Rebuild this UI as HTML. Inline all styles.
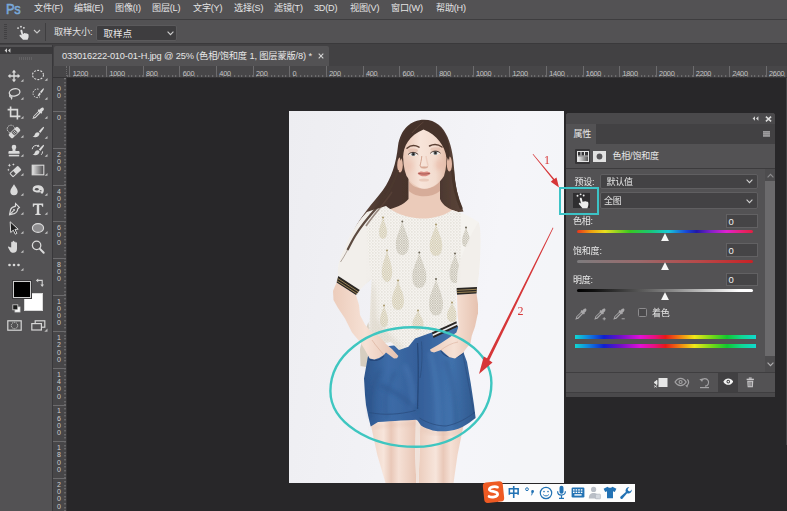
<!DOCTYPE html>
<html lang="zh-CN">
<head>
<meta charset="utf-8">
<title>Photoshop</title>
<style>
*{box-sizing:border-box;margin:0;padding:0}
html,body{width:787px;height:511px;overflow:hidden;background:#282729}
body{position:relative;font-family:"Liberation Sans","Noto Sans CJK SC",sans-serif;color:#dcdcdc;font-size:9.5px;line-height:1}
.abs{position:absolute}
#menubar{left:0;top:0;width:787px;height:19px;background:#535254}
#menubar span{position:absolute;top:4.300px;font-size:9.100px;color:#e4e4e4;white-space:nowrap;letter-spacing:-0.2px}
#ps{position:absolute;left:5.500px;top:1.500px;font-size:14px;font-weight:normal;color:#79a8d8;letter-spacing:-0.3px;transform:scaleX(.92);transform-origin:0 0;-webkit-text-stroke:.55px #7aa9d9;font-family:"Liberation Sans",sans-serif}
#optbar{left:0;top:19px;width:787px;height:25px;background:#535254;border-top:1px solid #3e3d3f;border-bottom:1px solid #3a393b}
#tabbar{left:0;top:44px;width:787px;height:22px;background:#424143}
#tab{left:54px;top:46px;width:275px;height:20px;background:#535254;border-radius:2px 2px 0 0}
#tab span{position:absolute;left:8px;top:5.700px;font-size:9.25px;color:#e6e6e6;white-space:nowrap;letter-spacing:-0.15px}
#toolbar{left:0;top:45px;width:52px;height:466px;background:#535254}
#toolhead{left:0;top:46.500px;width:52px;height:7px;background:#3a393b}
#tgap{left:52px;top:45px;width:1px;height:466px;background:#38373a}
#hruler{left:53px;top:65.500px;width:734px;height:12.500px;background:#474648;border-bottom:1px solid #353436}
#vruler{left:53px;top:78px;width:14px;height:433px;background:#474648;border-right:1px solid #353436}
#canvas{left:67px;top:78px;width:720px;height:433px;background:#282729}
#photo{left:289px;top:111px;width:275px;height:372px;background:#efeff3}
.rl{position:absolute;top:4.300px;font-size:7.300px;font-weight:normal;color:#c4c4c4;letter-spacing:-0.2px}
#hruler{overflow:hidden}#vruler{overflow:hidden}
.hticks{position:absolute;left:14px;right:0;bottom:0;height:2px;background:repeating-linear-gradient(90deg,#757476 0,#757476 1px,transparent 1px,transparent 3.665px);background-position:2.200px 0}
.vticks{position:absolute;top:0;bottom:0;right:0;width:2px;background:repeating-linear-gradient(180deg,#757476 0,#757476 1px,transparent 1px,transparent 3.665px);background-position:0 0.300px}
.corner{position:absolute;left:0;top:0;width:14px;height:12.500px;border-right:1px dotted #6a696b;border-bottom:1px dotted #6a696b}
.rt{position:absolute;display:block;top:0;width:1px;height:12px;background:#6c6b6d}
.vl{position:absolute;left:3px;font-size:7px;font-weight:normal;color:#cfcfcf;width:6px;text-align:center;line-height:7.3px}
.vt{position:absolute;display:block;left:0;height:1px;width:14px;background:#6c6b6d}
.grip{position:absolute;left:4px;top:4px;width:3px;height:16px;background:repeating-linear-gradient(180deg,#414042 0,#414042 1px,transparent 1px,transparent 2px)}
.dd{background:#434244;border:1px solid #605f61;border-radius:2px}
.dd span{position:absolute;font-size:9.500px;color:#e6e6e6;white-space:nowrap}
#panel{left:566px;top:113px;width:209px;height:284px;background:#535254;border-radius:3px 3px 0 0}
#panel .t{font-size:9px;color:#e8e8e8;white-space:nowrap;letter-spacing:-0.2px;margin-top:.8px}
#panel .dd span{font-size:9px;letter-spacing:-0.2px;margin-top:.6px}
.nb{width:32px;height:13.500px;background:#454446;border:1px solid #626163}
.nb span{position:absolute;left:1.500px;top:1.500px;font-size:9.500px;color:#f0f0f0}
.hd{position:absolute;width:0;height:0;margin-left:.8px;border-left:4.200px solid transparent;border-right:4.200px solid transparent;border-bottom:8px solid #f6f6f6;filter:drop-shadow(0 0 .7px #1c1c1c)}
</style>
</head>
<body>
<div id="menubar" class="abs">
<div id="ps">Ps</div>
<span style="left:34px">文件(F)</span>
<span style="left:74px">编辑(E)</span>
<span style="left:115px">图像(I)</span>
<span style="left:152px">图层(L)</span>
<span style="left:193px">文字(Y)</span>
<span style="left:234px">选择(S)</span>
<span style="left:274px">滤镜(T)</span>
<span style="left:314px">3D(D)</span>
<span style="left:350px">视图(V)</span>
<span style="left:391px">窗口(W)</span>
<span style="left:436px">帮助(H)</span>
</div>
<div id="optbar" class="abs">
<div class="grip"></div>
<svg class="abs" style="left:13.500px;top:3.500px" width="18" height="18" viewBox="0 0 16 16"><g fill="#e2e2e2"><path d="M6.2 5.2c.7-.2 1.2.2 1.3.9l.5 2.6.6-.1c.4-.7 1.1-.6 1.500-.1.500-.5 1.200-.4 1.500.2.600-.3 1.200.1 1.300.8.200 1.300.1 2.600-.5 3.700l-.3.800H8.000L5.100 10.800c-.4-.5-.2-1 .2-1.200.4-.2.800-.1 1.100.2l.5.500-1.200-4c-.1-.500.100-.900.500-1.100z"/><circle cx="3.600" cy="3.600" r=".8"/><circle cx="6.200" cy="2.400" r=".8"/><circle cx="8.800" cy="3.400" r=".8"/></g></svg>
<svg class="abs" style="left:33px;top:9px" width="8" height="6" viewBox="0 0 8 6"><path d="M1 1l3 3 3-3" fill="none" stroke="#c9c9c9" stroke-width="1.100"/></svg>
<div class="abs" style="left:45px;top:3px;width:1px;height:18px;background:#3f3e40"></div>
<span class="abs" style="left:54px;top:7.500px;font-size:9.200px;color:#e0e0e0;white-space:nowrap;letter-spacing:-0.2px">取样大小:</span>
<div class="abs dd" style="left:96px;top:4.500px;width:81px;height:16.500px;background:#3e3d3f;border-color:#5b5a5c"><span style="left:6.500px;top:3px">取样点</span>
<svg class="abs" style="right:2.500px;top:5.500px" width="7" height="5" viewBox="0 0 7 5"><path d="M.6.700l2.900 2.900L6.400.700" fill="none" stroke="#d0d0d0" stroke-width="1.100"/></svg></div>
</div>
<div id="tabbar" class="abs"></div>
<div id="tab" class="abs"><span>033016222-010-01-H.jpg @ 25% (色相/饱和度 1, 图层蒙版/8) *</span><svg class="abs" style="left:264px;top:7px" width="6" height="6" viewBox="0 0 6 6"><path d="M.7.700l4.600 4.600M5.300.700L.7 5.300" stroke="#d4d4d4" stroke-width="1.100"/></svg></div>
<div id="toolbar" class="abs"></div>
<div id="toolhead" class="abs"></div>
<div id="tools"><svg class="abs" style="left:5.8px;top:67.8px;overflow:visible" width="16" height="16" viewBox="0 0 16 16"><g fill="#dadada"><path d="M8 1.800l2.200 2.600H8.700v2.900h2.900V5.800L14.200 8l-2.600 2.200V8.700H8.700v2.900h1.500L8 14.200l-2.200-2.600h1.500V8.700H4.400v1.500L1.800 8l2.600-2.200v1.500h2.900V4.400H5.800z"/></g><path d="M17.500 11v2.800h-2.800z" fill="#c2c2c2"/></svg><svg class="abs" style="left:29.6px;top:67.4px;overflow:visible" width="16" height="16" viewBox="0 0 16 16"><ellipse cx="8" cy="8" rx="5.500" ry="4.600" fill="none" stroke="#dadada" stroke-width="1.100" stroke-dasharray="2 1.200"/><path d="M17.500 11v2.800h-2.800z" fill="#c2c2c2"/></svg><svg class="abs" style="left:6.0px;top:86.0px;overflow:visible" width="16" height="16" viewBox="0 0 16 16"><g fill="none" stroke="#dadada" stroke-width="1.300"><ellipse cx="8.600" cy="6.400" rx="5.400" ry="3.600" transform="rotate(-14 8.600 6.400)"/><path d="M4.400 8.600c-1.400 1.200-.6 2.600.6 2.400 1-.2 1 1 .2 2.400"/></g><path d="M17.500 11v2.800h-2.800z" fill="#c2c2c2"/></svg><svg class="abs" style="left:30.0px;top:86.0px;overflow:visible" width="16" height="16" viewBox="0 0 16 16"><g><path d="M8.500 3.200a4.300 4.300 0 1 0 1.500 7.500" fill="none" stroke="#dadada" stroke-width="1" stroke-dasharray="1.600 1.100"/><path d="M13.800 2.400c.5.500-.8 2.800-2.500 4.800l-1.300-1.200c1.700-2 3.300-4 3.800-3.600zM9.500 6.600l1.200 1.200c-.3 1.600-1.700 2.600-3.300 2.500.9-.8.900-2.700 2.100-3.700z" fill="#dadada"/></g><path d="M17.500 11v2.800h-2.800z" fill="#c2c2c2"/></svg><svg class="abs" style="left:6.0px;top:105.2px;overflow:visible" width="16" height="16" viewBox="0 0 16 16"><g fill="none" stroke="#dadada" stroke-width="1.600"><path d="M4.600 1.600v9.800h9.800"/><path d="M1.600 4.600h9.800v9.800"/></g><path d="M17.500 11v2.800h-2.800z" fill="#c2c2c2"/></svg><svg class="abs" style="left:30.0px;top:105.2px;overflow:visible" width="16" height="16" viewBox="0 0 16 16"><g fill="#dadada"><path d="M13.300 2.700c.9.900.7 2.100-.1 2.900l-1.500 1.500.6.600-1.100 1.100-.7-.7-4.700 4.700c-.5.500-1.200.7-1.800.5l-1 .8-.6-.6.800-1c-.2-.6 0-1.300.5-1.800l4.700-4.700-.7-.7 1.100-1.100.600.600 1.500-1.500c.800-.800 2-.900 2.400-.600zM8.600 6.900L4.300 11.200c-.3.300-.3.700-.2.900.2.100.600.100.900-.2l4.300-4.300z"/></g><path d="M17.500 11v2.800h-2.800z" fill="#c2c2c2"/></svg><svg class="abs" style="left:6.0px;top:124.4px;overflow:visible" width="16" height="16" viewBox="0 0 16 16"><g><circle cx="5" cy="5" r="3.800" fill="none" stroke="#dadada" stroke-width=".9" stroke-dasharray="1.400 1"/><g transform="rotate(-45 8.500 8.500)"><rect x="2.200" y="5.700" width="12.600" height="5.600" rx="1.600" fill="#dadada"/><rect x="6.300" y="6.400" width="4.400" height="4.200" fill="#535254"/><circle cx="7.600" cy="7.700" r=".55" fill="#dadada"/><circle cx="9.400" cy="7.700" r=".55" fill="#dadada"/><circle cx="7.600" cy="9.400" r=".55" fill="#dadada"/><circle cx="9.400" cy="9.400" r=".55" fill="#dadada"/></g></g><path d="M17.500 11v2.800h-2.800z" fill="#c2c2c2"/></svg><svg class="abs" style="left:30.0px;top:124.8px;overflow:visible" width="16" height="16" viewBox="0 0 16 16"><g fill="#dadada"><path d="M13.900 1.900c.6.600-1.300 3.300-3.600 6l-1.500-1.400c2.300-2.700 4.500-5.100 5.100-4.600zM8.200 7.200l1.400 1.400c-.3 2.200-2 3.700-4.400 3.700-1.100 0-2-.3-2.600-.7 1.600-.3 1.900-1.200 2.300-2.300.4-1.200 1.600-2.200 3.300-2.100z"/></g><path d="M17.500 11v2.800h-2.800z" fill="#c2c2c2"/></svg><svg class="abs" style="left:6.0px;top:143.3px;overflow:visible" width="16" height="16" viewBox="0 0 16 16"><g fill="#dadada"><path d="M8 1.800a2.300 2.300 0 0 1 2.300 2.300c0 1.100-.8 1.700-.9 2.800-.1.800.3 1.200 1.300 1.200h1.600c.8 0 1.300.5 1.300 1.300v1.400H2.400V9.400c0-.8.500-1.300 1.300-1.300h1.600c1 0 1.400-.4 1.300-1.200-.1-1.100-.9-1.700-.9-2.800A2.300 2.300 0 0 1 8 1.800z"/><rect x="2.800" y="11.800" width="10.400" height="1.600"/></g><path d="M17.500 11v2.800h-2.800z" fill="#c2c2c2"/></svg><svg class="abs" style="left:30.0px;top:143.3px;overflow:visible" width="16" height="16" viewBox="0 0 16 16"><g><path d="M13.900 1.900c.6.600-1.300 3.300-3.600 6l-1.500-1.400c2.300-2.700 4.500-5.100 5.100-4.600zM8.200 7.200l1.400 1.400c-.3 2.200-2 3.700-4.400 3.700-1.100 0-2-.3-2.600-.7 1.600-.3 1.900-1.200 2.300-2.300.4-1.200 1.600-2.200 3.300-2.100z" fill="#dadada"/><path d="M2.200 6.200a4.200 4.200 0 0 1 6.300-3.200M12.600 8.400a4.600 4.600 0 0 1-1.400 3.400" fill="none" stroke="#dadada" stroke-width="1"/><path d="M8.100 1.400l1.600 2.200-2.700.3z" fill="#dadada"/></g><path d="M17.500 11v2.800h-2.800z" fill="#c2c2c2"/></svg><svg class="abs" style="left:6.0px;top:162.0px;overflow:visible" width="16" height="16" viewBox="0 0 16 16"><g fill="#dadada"><g transform="rotate(-42 9.500 9.500)"><rect x="3.600" y="6.700" width="11.600" height="5.600" rx="1.100"/><rect x="4.600" y="7.700" width="3.600" height="3.600" fill="#535254"/></g><path d="M3.400 1.600l.5 1.200 1.200.5-1.200.5-.5 1.200-.5-1.200-1.200-.5 1.200-.5zM7.400 1.200l.4.900.9.400-.9.400-.4.900-.4-.9-.9-.4.900-.4zM2.400 6.600l.4.900.9.400-.9.400-.4.900-.4-.9-.9-.4.900-.4z"/></g><path d="M17.500 11v2.800h-2.800z" fill="#c2c2c2"/></svg><svg class="abs" style="left:30.0px;top:161.6px;overflow:visible" width="16" height="16" viewBox="0 0 16 16"><defs><linearGradient id="gg" x1="0" x2="1"><stop offset="0" stop-color="#e6e6e6"/><stop offset="1" stop-color="#4a494b"/></linearGradient></defs><rect x="2.200" y="3.200" width="11.600" height="9.600" fill="url(#gg)" stroke="#dadada" stroke-width="1.100"/><path d="M17.500 11v2.800h-2.800z" fill="#c2c2c2"/></svg><svg class="abs" style="left:6.0px;top:181.5px;overflow:visible" width="16" height="16" viewBox="0 0 16 16"><path d="M8 2.200c1.600 2.600 3.700 4.900 3.700 7.400a3.700 3.700 0 0 1-7.400 0c0-2.500 2.100-4.800 3.700-7.400z" fill="#dadada"/><path d="M17.500 11v2.800h-2.800z" fill="#c2c2c2"/></svg><svg class="abs" style="left:30.0px;top:181.5px;overflow:visible" width="16" height="16" viewBox="0 0 16 16"><g fill="#dadada"><path d="M2.600 7.200c0-2.400 2.200-3.900 5.200-3.900s5.700 1.500 6 4.200c.2 1.500-.3 3-1 3.900h-1.900l-.5-1.400c-1 .5-2.400.6-3.700.4-2.500-.4-4.100-1.300-4.100-3.200z"/><ellipse cx="6.800" cy="7.200" rx="1.900" ry="1.300" fill="#535254"/><rect x="9.800" y="8.200" width="1.700" height="1.100" fill="#535254"/></g><path d="M17.500 11v2.800h-2.800z" fill="#c2c2c2"/></svg><svg class="abs" style="left:6.0px;top:200.8px;overflow:visible" width="16" height="16" viewBox="0 0 16 16"><g fill="none" stroke="#dadada" stroke-width="1.200"><path d="M9.600 2.600l3.800 3.800-1.600 1.400c-.2 2.300-1.300 4-3.600 4.800l-4.600 1 .9-4.700c.8-2.300 2.500-3.300 4.800-3.500z" /><path d="M3.800 13.400l3.600-3.600"/><circle cx="8" cy="9" r="1" fill="#dadada" stroke="none"/></g><path d="M17.500 11v2.800h-2.800z" fill="#c2c2c2"/></svg><svg class="abs" style="left:30.0px;top:200.8px;overflow:visible" width="16" height="16" viewBox="0 0 16 16"><path d="M2.800 2.600h10.400v3.200h-1.100c-.1-1.100-.5-1.700-1.600-1.700H9.200v7.900c0 .8.400 1.100 1.500 1.100v1H5.300v-1c1.100 0 1.500-.3 1.500-1.100V4.100H5.500c-1.100 0-1.500.6-1.600 1.700H2.800z" fill="#dadada"/><path d="M17.500 11v2.800h-2.800z" fill="#c2c2c2"/></svg><svg class="abs" style="left:6.0px;top:220.0px;overflow:visible" width="16" height="16" viewBox="0 0 16 16"><path d="M4.200 1.800l8 7.400-3.300.2 2 4-1.700.8-1.900-4-2.600 2.300z" fill="#1f1f1f" stroke="#dadada" stroke-width="1"/><path d="M17.500 11v2.800h-2.800z" fill="#c2c2c2"/></svg><svg class="abs" style="left:30.0px;top:219.6px;overflow:visible" width="16" height="16" viewBox="0 0 16 16"><ellipse cx="8" cy="8" rx="5.600" ry="4.400" fill="#8d8c8e" stroke="#dadada" stroke-width="1.100"/><path d="M17.500 11v2.800h-2.800z" fill="#c2c2c2"/></svg><svg class="abs" style="left:6.0px;top:238.8px;overflow:visible" width="16" height="16" viewBox="0 0 16 16"><path d="M5.200 8.400V3.600c0-1.100 1.400-1.100 1.400 0V2.600c0-1.100 1.500-1.100 1.500 0v.600c0-1.100 1.500-1.100 1.500 0v.900c0-1.100 1.400-1.100 1.400 0v5.700c0 2.400-1.200 4-3.700 4-1.800 0-2.600-.8-3.400-2.100L2.200 8.800c-.5-.900.500-1.600 1.200-.9z" fill="#dadada"/><path d="M17.500 11v2.800h-2.800z" fill="#c2c2c2"/></svg><svg class="abs" style="left:30.0px;top:239.0px;overflow:visible" width="16" height="16" viewBox="0 0 16 16"><g fill="none" stroke="#dadada"><circle cx="6.600" cy="6.400" r="4.200" stroke-width="1.300"/><path d="M9.700 9.600l4 4.200" stroke-width="2" stroke-linecap="round"/></g></svg><svg class="abs" style="left:6.0px;top:257.3px;overflow:visible" width="16" height="16" viewBox="0 0 16 16"><g fill="#dadada"><circle cx="3.500" cy="8" r="1.300"/><circle cx="8" cy="8" r="1.300"/><circle cx="12.500" cy="8" r="1.300"/></g><path d="M17.500 11v2.800h-2.800z" fill="#c2c2c2"/></svg>
<div class="abs" style="left:23.500px;top:292.500px;width:19px;height:18px;background:#fff;border:1px solid #d9d9d9"></div>
<div class="abs" style="left:12.500px;top:280.500px;width:18.500px;height:17.500px;background:#000;border:1px solid #cfcfcf;box-shadow:0 0 0 1px #3a393b"></div>
<svg class="abs" style="left:35px;top:278px" width="10" height="10" viewBox="0 0 10 10"><g fill="none" stroke="#d4d4d4" stroke-width="1.100"><path d="M2.600 2.400h4.600v4.800"/></g><path d="M3.200.6v3.600L.9 2.400zM5.400 6.600h3.600L7.200 9z" fill="#d4d4d4"/></svg>
<svg class="abs" style="left:11.500px;top:304px" width="9" height="9" viewBox="0 0 9 9"><rect x="3" y="3" width="5" height="5" fill="#fff" stroke="#d0d0d0" stroke-width=".8"/><rect x=".8" y=".8" width="5" height="5" fill="#1c1c1c" stroke="#d0d0d0" stroke-width=".8"/></svg>
<svg class="abs" style="left:6.500px;top:319.500px" width="15" height="11" viewBox="0 0 15 11"><rect x=".8" y=".8" width="13.400" height="9.400" fill="none" stroke="#d6d6d6" stroke-width="1.200"/><circle cx="7.500" cy="5.500" r="3.200" fill="none" stroke="#d6d6d6" stroke-width=".9" stroke-dasharray="1.200 .8"/></svg>
<svg class="abs" style="left:30.500px;top:319.500px;overflow:visible" width="15" height="11" viewBox="0 0 15 11"><rect x="4.200" y=".8" width="9.600" height="6.400" fill="#535254" stroke="#d6d6d6" stroke-width="1.200"/><rect x=".8" y="3.600" width="9.600" height="6.400" fill="#535254" stroke="#d6d6d6" stroke-width="1.200"/><path d="M16.500 8.500v3.200h-3.200z" fill="#b9b9b9"/></svg>
<svg class="abs" style="left:3.500px;top:47.800px" width="7" height="5" viewBox="0 0 7 5"><path d="M3 .3L.6 2.500 3 4.700zM6.400.3L4 2.500l2.400 2.200z" fill="#d0d0d0"/></svg>
<div class="abs" style="left:19px;top:57px;width:14px;height:3px;background:repeating-linear-gradient(90deg,#6a696b 0,#6a696b 1px,transparent 1px,transparent 2px);opacity:.7"></div>
</div>
<div id="tgap" class="abs"></div>
<div id="hruler" class="abs"><div class="corner"></div><div class="hticks"></div><i class="rt" style="left:16.4px"></i><b class="rl" style="left:19.7px">1200</b><i class="rt" style="left:53.1px"></i><b class="rl" style="left:56.4px">1000</b><i class="rt" style="left:89.7px"></i><b class="rl" style="left:93.0px">800</b><i class="rt" style="left:126.4px"></i><b class="rl" style="left:129.7px">600</b><i class="rt" style="left:163.0px"></i><b class="rl" style="left:166.3px">400</b><i class="rt" style="left:199.7px"></i><b class="rl" style="left:203.0px">200</b><i class="rt" style="left:236.3px"></i><b class="rl" style="left:239.6px">0</b><i class="rt" style="left:272.9px"></i><b class="rl" style="left:276.2px">200</b><i class="rt" style="left:309.6px"></i><b class="rl" style="left:312.9px">400</b><i class="rt" style="left:346.2px"></i><b class="rl" style="left:349.6px">600</b><i class="rt" style="left:382.9px"></i><b class="rl" style="left:386.2px">800</b><i class="rt" style="left:419.6px"></i><b class="rl" style="left:422.9px">1000</b><i class="rt" style="left:456.2px"></i><b class="rl" style="left:459.5px">1200</b><i class="rt" style="left:492.9px"></i><b class="rl" style="left:496.2px">1400</b><i class="rt" style="left:529.5px"></i><b class="rl" style="left:532.8px">1600</b><i class="rt" style="left:566.1px"></i><b class="rl" style="left:569.4px">1800</b><i class="rt" style="left:602.8px"></i><b class="rl" style="left:606.1px">2000</b><i class="rt" style="left:639.5px"></i><b class="rl" style="left:642.8px">2200</b><i class="rt" style="left:676.1px"></i><b class="rl" style="left:679.4px">2400</b><i class="rt" style="left:712.8px"></i><b class="rl" style="left:716.0px">2600</b></div>
<div id="vruler" class="abs"><div class="vticks"></div><i class="vt" style="top:-3.4px"></i><b class="vl" style="top:-0.5px">&nbsp;<br>0<br>0</b><i class="vt" style="top:33.3px"></i><b class="vl" style="top:36.2px">0</b><i class="vt" style="top:69.9px"></i><b class="vl" style="top:72.8px">2<br>0<br>0</b><i class="vt" style="top:106.6px"></i><b class="vl" style="top:109.5px">4<br>0<br>0</b><i class="vt" style="top:143.2px"></i><b class="vl" style="top:146.2px">6<br>0<br>0</b><i class="vt" style="top:179.9px"></i><b class="vl" style="top:182.8px">8<br>0<br>0</b><i class="vt" style="top:216.6px"></i><b class="vl" style="top:219.5px">1<br>0<br>0<br>0</b><i class="vt" style="top:253.2px"></i><b class="vl" style="top:256.1px">1<br>2<br>0<br>0</b><i class="vt" style="top:289.9px"></i><b class="vl" style="top:292.8px">1<br>4<br>0<br>0</b><i class="vt" style="top:326.5px"></i><b class="vl" style="top:329.4px">1<br>6<br>0<br>0</b><i class="vt" style="top:363.1px"></i><b class="vl" style="top:366.0px">1<br>8<br>0<br>0</b><i class="vt" style="top:399.8px"></i><b class="vl" style="top:402.7px">2<br>0<br>0<br>0</b></div>
<div id="canvas" class="abs"></div>
<div id="photo" class="abs"></div>
<svg id="fig" class="abs" style="left:289px;top:111px" width="275" height="372" viewBox="289 111 275 372">
<defs>
<filter id="soft" x="-5%" y="-5%" width="110%" height="110%"><feGaussianBlur stdDeviation="0.650"/></filter>
<filter id="b2" x="-30%" y="-30%" width="160%" height="160%"><feGaussianBlur stdDeviation="2"/></filter>
<filter id="b4" x="-30%" y="-30%" width="160%" height="160%"><feGaussianBlur stdDeviation="4"/></filter>
<linearGradient id="bgG" x1="0" y1="0" x2="1" y2=".25"><stop offset="0" stop-color="#ededf1"/><stop offset=".45" stop-color="#f1f1f5"/><stop offset=".8" stop-color="#f5f5f9"/><stop offset="1" stop-color="#f4f5f8"/></linearGradient>
<linearGradient id="hairG" x1="0" y1="0" x2="1" y2="0"><stop offset="0" stop-color="#6a5246"/><stop offset=".3" stop-color="#4b372f"/><stop offset=".7" stop-color="#44312a"/><stop offset="1" stop-color="#5c463a"/></linearGradient>
<linearGradient id="skinG" x1="0" y1="0" x2="1" y2="0"><stop offset="0" stop-color="#e9c7b6"/><stop offset=".4" stop-color="#f7e4d9"/><stop offset=".75" stop-color="#f3dccf"/><stop offset="1" stop-color="#e4bda9"/></linearGradient>
<linearGradient id="armL" x1="0" y1="0" x2="1" y2="0"><stop offset="0" stop-color="#ecccbb"/><stop offset=".5" stop-color="#f6e1d5"/><stop offset="1" stop-color="#e6c2b0"/></linearGradient>
<linearGradient id="legG" x1="0" y1="0" x2="1" y2="0"><stop offset="0" stop-color="#eccdbd"/><stop offset=".35" stop-color="#f7e5db"/><stop offset=".5" stop-color="#e9c8b8"/><stop offset=".65" stop-color="#f5e0d5"/><stop offset="1" stop-color="#e8c6b5"/></linearGradient>
<linearGradient id="denim" x1="0" y1="0" x2="1" y2="0"><stop offset="0" stop-color="#2c558c"/><stop offset=".22" stop-color="#3d6ca8"/><stop offset=".5" stop-color="#355f99"/><stop offset=".78" stop-color="#4172ad"/><stop offset="1" stop-color="#2f588d"/></linearGradient>
<pattern id="dots" width="3" height="3" patternUnits="userSpaceOnUse"><circle cx=".9" cy=".9" r=".55" fill="#aaa28c"/><circle cx="2.400" cy="2.400" r=".42" fill="#c4bda9"/></pattern>
<clipPath id="shirtClip"><path id="shirtP" d="M386 206C380 208 372 210 367 212C358 221 349 236 345 248C340 256 337 266 338.300 276L359.800 290L366 283.600L371.600 279L370.500 300L369.500 324.500L368 338L372 345.500L390.800 342L399 350L408.400 346.700L415 338.500L433 332L456.500 321.500L456 296.500L456.600 288L477 287C479 278 480.500 260 480.500 240C480.500 230 480 226 478.500 222C470 216 460 212 452 210C444 216 432 219 420 218.500C408 218 394 213 386 206Z"/></clipPath>
<pattern id="d2" width="2.400" height="2.400" patternUnits="userSpaceOnUse"><rect width="2.400" height="2.400" fill="#efece5"/><circle cx=".8" cy=".8" r=".58" fill="#8f8974"/><circle cx="2" cy="2" r=".45" fill="#aaa491"/></pattern>
<pattern id="d3" width="2.400" height="2.400" patternUnits="userSpaceOnUse"><rect width="2.400" height="2.400" fill="#efece3"/><circle cx=".8" cy=".8" r=".6" fill="#b5a77c"/><circle cx="2" cy="2" r=".5" fill="#c4b88f"/></pattern>
</defs>
<rect x="289" y="111" width="275" height="372" fill="url(#bgG)"/>
<g filter="url(#soft)">
<!-- hair back -->
<path d="M424 119.800C411 119.800 400.500 129 398 146C396 164 391.500 178 383 190C372 204 361 216 354 230C351 237 348.500 243 346.500 249L349 249.500C353 243 360 234 370 223L386 208L408 214L440 214L463.500 211.500C458.500 200 455 186 454.200 170C453.200 150 448 119.800 424 119.800Z" fill="url(#hairG)"/>
<!-- neck + chest -->
<path d="M408.500 176L408.500 199C404 205 394 208 384 211L420 224L458 212C449 209 443 206 440 199L440 176Z" fill="#ebcbba"/>
<path d="M409 181C414 191 434 192 440 180L440 191C432 198 416 198 409 191Z" fill="#cfa28d" opacity=".75"/>
<!-- ears -->
<ellipse cx="400" cy="165" rx="2.800" ry="7.500" fill="#e2b7a3"/><ellipse cx="449.400" cy="164" rx="2.600" ry="7.500" fill="#e2b7a3"/>
<!-- face -->
<path d="M424 128.500C412 128.500 404.500 137 403.200 151C402.800 160 403.500 168 406.500 176C411 183 418 188.800 424.500 188.800C431 188.800 440 183 444 176C446.500 168 446.800 160 446.200 151C445 137 436 128.500 424 128.500Z" fill="url(#skinG)"/>
<!-- hair front -->
<path d="M424 120.500C414 121 403 129 400.500 146C399.700 153 399.800 158 400.500 161C400.800 159 401.800 157.500 403 157C403.500 146 409 135.500 423.500 129.500C437.500 135 444.500 146 446.500 157C447.800 157.500 448.600 159 449 161C449.800 156 449.800 151 449 146C446 130 436 121 424 120.500Z" fill="#45322a"/>
<path d="M423.500 122C421 124 417 127 412 133" stroke="#6a5145" stroke-width="1" fill="none" opacity=".6"/>
<!-- features -->
<path d="M407 148.200C410.500 145.200 415 145 419 147.200" stroke="#5a3f33" stroke-width="1.500" fill="none" stroke-linecap="round"/>
<path d="M429.500 146C433.500 143.800 438 144 442 147" stroke="#5a3f33" stroke-width="1.500" fill="none" stroke-linecap="round"/>
<ellipse cx="413" cy="150.500" rx="5" ry="2" fill="#dcb3a0" opacity=".55"/><ellipse cx="435.500" cy="149.300" rx="5" ry="2" fill="#dcb3a0" opacity=".55"/>
<path d="M408.600 154.600C410.500 152 415.500 152 417.800 154.800C415.500 156.500 410.800 156.500 408.600 154.600Z" fill="#f3efec"/>
<path d="M430.600 153.400C432.800 150.800 437.800 150.800 440 153.400C437.800 155.200 433 155.200 430.600 153.400Z" fill="#f3efec"/>
<circle cx="413.300" cy="154.200" r="1.900" fill="#5c676b"/><circle cx="435.400" cy="152.900" r="1.900" fill="#5c676b"/>
<circle cx="413.300" cy="154.200" r=".9" fill="#221a18"/><circle cx="435.400" cy="152.900" r=".9" fill="#221a18"/>
<path d="M408.200 154.500C410.500 151.700 415.500 151.600 418.200 154.600M430.300 153.300C432.800 150.400 437.800 150.400 440.500 153.200" stroke="#33241f" stroke-width=".9" fill="none"/>
<path d="M421.800 156C421.500 160 420.500 163.500 420 166C421.500 168.300 426.500 168.300 428.200 166.200" stroke="#d2a28e" stroke-width="1" fill="none"/>
<path d="M426 156C426.500 160 427.500 163 428 165.500" stroke="#e9c6b5" stroke-width="1.400" fill="none" opacity=".7"/>
<ellipse cx="424" cy="167.400" rx="3.600" ry="1.100" fill="#d5a591" opacity=".7"/>
<path d="M417.600 173.200C420 170.800 422.500 171.300 424 172.100C425.500 171.300 428 170.800 430.600 173.200C428 177.400 420 177.400 417.600 173.200Z" fill="#d98a80"/>
<path d="M418.300 173.300C422 174.300 426 174.300 430 173.200" stroke="#9c4d47" stroke-width=".8" fill="none"/>
<ellipse cx="424" cy="180" rx="5" ry="1.500" fill="#e3bba8" opacity=".6"/>
<ellipse cx="409.500" cy="166" rx="4" ry="5.500" fill="#ecbcaa" opacity=".45" filter="url(#b2)"/><ellipse cx="439" cy="165" rx="4" ry="5.500" fill="#e7b3a0" opacity=".5" filter="url(#b2)"/>
<!-- legs -->
<path d="M366 400L371.500 428L377.300 455L385.500 483L416.300 483L415.300 455L416 410Z" fill="url(#legG)"/>
<path d="M420.300 418L419.500 455L418.500 483L453.500 483L457.500 455L463 428L468 400Z" fill="url(#legG)"/>
<path d="M416 420L415.300 455L416.300 483L418.500 483L419.500 455L420.300 420Z" fill="#f0e2da"/>
<path d="M372 428C385 425 400 424 415.500 424" stroke="#dcb5a3" stroke-width="2" fill="none" opacity=".5" filter="url(#b2)"/>
<path d="M421 429C432 434 446 436 462 431" stroke="#dcb5a3" stroke-width="2" fill="none" opacity=".5" filter="url(#b2)"/>
<!-- back hem piece -->
<path d="M368.500 322L370 345L368.500 358L366 367L360.500 366L360 349L363 336Z" fill="#d6cec0"/>
<!-- shorts -->
<path d="M367.800 357L372 348L398 345L411 338L434 329L458 326L463.500 352.600L467 362L470.700 383L474 405L475.600 418C471 421.500 467 424.500 462.400 427C457 429.500 451 431 446 431.300C441 431.500 437 431.200 432.700 430.500C428 429 424 427.500 421 425.500L417.500 420.500L416 419.800C411 420.300 406 420.500 401 420.600C393 421.200 385 421.700 378 422L370.700 426.400L368.300 416.500L366 405L365 395L364 378.500Z" fill="url(#denim)"/>
<path d="M380 370C372 385 368 400 372 418M395 372C386 388 384 402 388 419M446 360C452 380 456 400 456 426" stroke="#27497a" stroke-width="3" fill="none" opacity=".35" filter="url(#b2)"/>
<path d="M405 365C412 380 414 395 412 410M430 352C436 375 438 400 438 428" stroke="#5a8cc8" stroke-width="4" fill="none" opacity=".35" filter="url(#b2)"/>
<path d="M417.500 343C418.500 360 418.500 380 417.500 409" stroke="#27497a" stroke-width="1.300" fill="none"/>
<path d="M421.500 341.500C422.500 355 422 368 420 378" stroke="#2b4f82" stroke-width=".8" fill="none"/>
<path d="M369 412.500C384 415.500 400 414.500 415.500 410.500" stroke="#2a4d80" stroke-width="1" fill="none" opacity=".8"/><path d="M380 385C395 392 410 400 416.500 412" stroke="#24467a" stroke-width="2.500" fill="none" opacity=".45" filter="url(#b2)"/>
<path d="M419.500 418C428 423.500 438 426 446 426C457 424 467 418.500 475 412" stroke="#2a4d80" stroke-width="1" fill="none" opacity=".8"/>
<path d="M368.500 358.500C372 362 380 361 384 355.500" stroke="#25477a" stroke-width="1.100" fill="none"/>
<path d="M441 350.500C444 357 455 361 463.500 352.600" stroke="#25477a" stroke-width="1.100" fill="none"/>
<path d="M462 350C466 370 470 392 474 414" stroke="#2a4d80" stroke-width=".8" fill="none" opacity=".8"/>
<!-- shirt -->
<use href="#shirtP" fill="#f5f3ef"/>
<g clip-path="url(#shirtClip)">
<rect x="366" y="205" width="95" height="145" fill="url(#dots)" opacity=".52"/>
<g><path d="M402.3 221.0C404.2 229.5 408.8 236.3 408.8 243.9C408.8 252.4 405.6 255.0 402.3 255.0C399.1 255.0 395.8 252.4 395.8 243.9C395.8 236.3 400.4 229.5 402.3 221.0Z" fill="url(#d2)"/><circle cx="402.3" cy="221.5" r="1" fill="#6b6556"/><path d="M436.0 224.0C437.9 232.0 442.3 238.4 442.3 245.6C442.3 253.6 439.1 256.0 436.0 256.0C432.9 256.0 429.7 253.6 429.7 245.6C429.7 238.4 434.1 232.0 436.0 224.0Z" fill="url(#d3)"/><circle cx="436.0" cy="224.5" r="1" fill="#a8976a"/><path d="M419.3 252.0C421.4 261.0 426.3 268.2 426.3 276.3C426.3 285.3 422.8 288.0 419.3 288.0C415.8 288.0 412.3 285.3 412.3 276.3C412.3 268.2 417.2 261.0 419.3 252.0Z" fill="url(#d2)"/><circle cx="419.3" cy="252.5" r="1" fill="#6b6556"/><path d="M455.0 253.0C456.6 260.5 460.5 266.5 460.5 273.2C460.5 280.8 457.8 283.0 455.0 283.0C452.2 283.0 449.5 280.8 449.5 273.2C449.5 266.5 453.4 260.5 455.0 253.0Z" fill="url(#d2)"/><circle cx="455.0" cy="253.5" r="1" fill="#6b6556"/><path d="M436.0 278.5C438.1 287.8 443.0 295.1 443.0 303.5C443.0 312.7 439.5 315.5 436.0 315.5C432.5 315.5 429.0 312.7 429.0 303.5C429.0 295.1 433.9 287.8 436.0 278.5Z" fill="url(#d2)"/><circle cx="436.0" cy="279.0" r="1" fill="#6b6556"/><path d="M387.0 250.0C388.6 258.0 392.2 264.4 392.2 271.6C392.2 279.6 389.6 282.0 387.0 282.0C384.4 282.0 381.8 279.6 381.8 271.6C381.8 264.4 385.4 258.0 387.0 250.0Z" fill="url(#d3)"/><circle cx="387.0" cy="250.5" r="1" fill="#a8976a"/><path d="M398.0 280.0C399.8 287.5 404.0 293.5 404.0 300.2C404.0 307.8 401.0 310.0 398.0 310.0C395.0 310.0 392.0 307.8 392.0 300.2C392.0 293.5 396.2 287.5 398.0 280.0Z" fill="url(#d3)"/><circle cx="398.0" cy="280.5" r="1" fill="#a8976a"/><path d="M418.0 310.0C419.6 315.0 423.5 319.0 423.5 323.5C423.5 328.5 420.8 330.0 418.0 330.0C415.2 330.0 412.5 328.5 412.5 323.5C412.5 319.0 416.4 315.0 418.0 310.0Z" fill="url(#d3)"/><circle cx="418.0" cy="310.5" r="1" fill="#a8976a"/><path d="M466.0 227.0C467.2 232.0 470.0 236.0 470.0 240.5C470.0 245.5 468.0 247.0 466.0 247.0C464.0 247.0 462.0 245.5 462.0 240.5C462.0 236.0 464.8 232.0 466.0 227.0Z" fill="url(#d2)"/><circle cx="466.0" cy="227.5" r="1" fill="#6b6556"/><path d="M383.0 217.0C384.2 222.5 387.0 226.9 387.0 231.8C387.0 237.3 385.0 239.0 383.0 239.0C381.0 239.0 379.0 237.3 379.0 231.8C379.0 226.9 381.8 222.5 383.0 217.0Z" fill="url(#d3)"/><circle cx="383.0" cy="217.5" r="1" fill="#a8976a"/><path d="M452.0 302.0C453.5 307.0 457.0 311.0 457.0 315.5C457.0 320.5 454.5 322.0 452.0 322.0C449.5 322.0 447.0 320.5 447.0 315.5C447.0 311.0 450.5 307.0 452.0 302.0Z" fill="url(#d3)"/><circle cx="452.0" cy="302.5" r="1" fill="#a8976a"/><path d="M384.0 305.0C385.2 310.5 388.0 314.9 388.0 319.9C388.0 325.4 386.0 327.0 384.0 327.0C382.0 327.0 380.0 325.4 380.0 319.9C380.0 314.9 382.8 310.5 384.0 305.0Z" fill="url(#d3)"/><circle cx="384.0" cy="305.5" r="1" fill="#a8976a"/></g>
<!-- sheer sleeves lighter -->
<path d="M367 212C358 221 349 236 345 248C340 256 337 266 338.300 276L359.800 290L371.600 279C368 255 366 232 367 212Z" fill="#f1eeea" opacity=".95"/>
<path d="M478.500 222C480 226 480.500 230 480.500 240C480.500 260 479 278 477 287L456.600 288L457.500 272C461 254 470 236 478.500 222Z" fill="#f1eeea" opacity=".95"/>
<path d="M371.600 279L370.500 300L369.500 324.500L368 338L372 346L392 343L399 350L404 348C396 340 384 330 377 318L375 290Z" fill="#d9d1c3" opacity=".55" filter="url(#b2)"/>
</g>
<!-- left arm -->
<path d="M336.600 282.600L356 295L359 305L360 315L365 324.400L370.800 331.400L380 337L386 344L392 349L398.400 356L397 358.200L394 358.500L386 352.600L383.800 355L379 358L374.400 359.600L369.700 358.500L364.400 349L360 342L352 332.600L345 318.500L338 308L333.500 300L333 291Z" fill="url(#armL)"/>
<path d="M372 340C376 346 380 350 383.800 355" stroke="#d9ae9b" stroke-width=".8" fill="none" opacity=".8"/>
<!-- right arm -->
<path d="M457 294.800L476.500 293.600L478 304L478 313.800L477.500 315L475 326.700L471.700 336L470.500 343L465 350L463.500 352.600L455 358.500L449.400 357.300L441 350L434 352.600L430.800 351.500L430 349.600L438.800 344.400L448 338.500L456.400 332.600L458.800 325.600L457.600 315L457.300 305Z" fill="url(#armL)"/>
<path d="M441 350C446 346 452 343 458 342" stroke="#d9ae9b" stroke-width=".8" fill="none" opacity=".7"/>
<!-- cuffs -->
<path d="M338.300 276L359.800 290L356 295L336.600 282.600Z" fill="#2b2622"/>
<path d="M337.600 278.400L358.600 292M336.900 280.800L357.200 293.800" stroke="#b59a63" stroke-width=".8" fill="none"/>
<path d="M456.600 288L477 287L476.500 293.600L457 294.800Z" fill="#2b2622"/>
<path d="M456.800 290.300L476.800 289.300M456.900 292.600L476.700 291.600" stroke="#b59a63" stroke-width=".8" fill="none"/>
<!-- hem stripe -->
<path d="M432 332.500L456.400 321.200L457.600 326.700L433.500 338Z" fill="#2a2624"/>
<path d="M432.700 335.300L457 324" stroke="#ececec" stroke-width="1.500" fill="none"/>
<!-- hair strands over left shoulder -->
<path d="M398 170C394 184 388 194 380 204C372 213 362 224 355 236C352 241 349.500 246 347.500 250" stroke="#4d392f" stroke-width="2.200" fill="none" opacity=".9"/><path d="M347.500 250C345 255 342.500 259 340.500 262" stroke="#6b5548" stroke-width=".9" fill="none" opacity=".55"/>
<path d="M392 192C385 203 375 213 366 226" stroke="#5d463b" stroke-width="1.600" fill="none" opacity=".6"/>
<path d="M452.500 170C453.500 186 456.500 198 461.500 209" stroke="#48352c" stroke-width="3" fill="none"/>
</g>
<!-- annotations -->
<path d="M330.4 391C330.4 355.8 366.9 327.3 412 327.3C455.9 327.3 491.4 352.2 491.4 383C491.4 418.2 457.6 446.8 416 446.8C368.7 446.8 330.4 421.8 330.4 391Z" fill="none" stroke="#3ec6c0" stroke-width="2.400"/>
<g fill="#d63638" stroke="none">
<path d="M532.600 154.200L553 179.800L550.800 181.800L559 187.500L556.500 177.500L554.300 179L533.200 154Z"/>
<path d="M552.800 227.600L487 358.300L483.800 356.500L479 374L492.500 362.500L489.300 360.300L553.400 227.900Z"/>
</g>
<text x="544" y="163.500" font-family="'Liberation Serif',serif" font-size="12" fill="#d63638">1</text>
<text x="517.500" y="315" font-family="'Liberation Serif',serif" font-size="12" fill="#d63638">2</text>
</svg>
<div id="panel" class="abs">
<div class="abs" style="left:0;top:0;width:209px;height:11px;background:#4a494b;border-radius:3px 3px 0 0"></div>
<svg class="abs" style="left:185.500px;top:3px" width="7" height="5" viewBox="0 0 7 5"><path d="M3 .3L.6 2.500 3 4.700zM6.400.3L4 2.500l2.400 2.200z" fill="#d4d4d4"/></svg>
<svg class="abs" style="left:199px;top:2.500px" width="7" height="6" viewBox="0 0 7 6"><path d="M.9.600l5.200 4.800M6.100.600L.9 5.400" stroke="#dcdcdc" stroke-width="1.500"/></svg>
<div class="abs" style="left:0;top:11px;width:209px;height:19.500px;background:#424143"></div>
<div class="abs" style="left:0;top:11px;width:30px;height:19.500px;background:#535254"></div>
<span class="abs t" style="left:7.500px;top:16px">属性</span>
<div class="abs" style="left:196.500px;top:17.500px;width:7.500px;height:6px;background:repeating-linear-gradient(180deg,#9b9a9c 0,#9b9a9c 1px,#8a898b 1px,#8a898b 2px)"></div>
<!-- header row icons -->
<div class="abs" style="left:8.500px;top:35.500px;width:15.500px;height:15px;background:#353436;border-radius:1px"></div>
<svg class="abs" style="left:10.500px;top:37.500px" width="12" height="11" viewBox="0 0 12 11"><defs><linearGradient id="hg" x1="0" x2="1"><stop offset="0" stop-color="#f0f0f0"/><stop offset="1" stop-color="#555"/></linearGradient></defs><rect x=".5" y=".5" width="11" height="10" fill="none" stroke="#e4e4e4"/><rect x="1" y="5.500" width="10" height="4.500" fill="url(#hg)"/><path d="M4 .5v4M7.500.5v4" stroke="#e4e4e4"/><path d="M.5 5h11" stroke="#e4e4e4" stroke-width=".8"/></svg>
<svg class="abs" style="left:27px;top:37.500px" width="13" height="11" viewBox="0 0 13 11"><rect width="13" height="11" fill="#e2e2e2"/><circle cx="6.500" cy="5.500" r="2.900" fill="#58575a"/></svg>
<span class="abs t" style="left:46.500px;top:38.500px">色相/饱和度</span>
<div class="abs" style="left:0;top:55px;width:209px;height:1px;background:#3c3b3d"></div>
<!-- preset -->
<span class="abs t" style="left:8.500px;top:64px">预设:</span>
<div class="abs dd" style="left:33.500px;top:60.500px;width:158px;height:15.500px"><span style="left:6px;top:2.500px">默认值</span><svg class="abs" style="right:4px;top:4.500px" width="7" height="5" viewBox="0 0 7 5"><path d="M.6.700l2.900 2.900L6.400.700" fill="none" stroke="#d0d0d0" stroke-width="1.100"/></svg></div>
<div class="abs dd" style="left:33.500px;top:78.500px;width:158px;height:17px"><span style="left:3.500px;top:3.800px">全图</span><svg class="abs" style="right:4px;top:6px" width="7" height="5" viewBox="0 0 7 5"><path d="M.6.700l2.900 2.900L6.400.700" fill="none" stroke="#d0d0d0" stroke-width="1.100"/></svg></div>
<div class="abs" style="left:7px;top:79.500px;width:17px;height:15px;background:#2f2e30"></div>
<svg class="abs" style="left:6.500px;top:79px" width="19" height="17.800" viewBox="0 0 16 15"><g fill="#ececec"><path d="M6.200 4.800c.7-.2 1.200.2 1.300.9l.5 2.600.6-.1c.4-.7 1.100-.6 1.500-.1.500-.5 1.200-.4 1.500.2.600-.3 1.200.1 1.300.8.200 1.300.1 2.600-.5 3.700l-.3.800H8L5.100 10.400c-.4-.5-.2-1 .2-1.200.4-.2.800-.1 1.100.2l.5.500-1.200-4c-.1-.5.100-.9.500-1.100z"/><circle cx="3.800" cy="3.200" r=".8"/><circle cx="6.400" cy="2" r=".8"/><circle cx="9" cy="3" r=".8"/></g></svg>
<!-- sliders -->
<span class="abs t" style="left:7px;top:103.500px">色相:</span>
<div class="abs nb" style="left:160px;top:101px"><span>0</span></div>
<div class="abs" style="left:11px;top:116.500px;width:176px;height:3.500px;border-radius:2px;background:linear-gradient(90deg,#e8341c 0%,#f0a010 8%,#e8e020 16%,#38c820 30%,#18c878 42%,#18c8d8 52%,#1848d8 62%,#2018a8 68%,#8020c8 76%,#e020d0 85%,#e82070 94%,#e02040 100%)"></div>
<div class="hd" style="left:94px;top:119.500px"></div>
<span class="abs t" style="left:7px;top:133px">饱和度:</span>
<div class="abs nb" style="left:160px;top:130px"><span>0</span></div>
<div class="abs" style="left:11px;top:146.500px;width:176px;height:3px;border-radius:2px;background:linear-gradient(90deg,#7d7c7e 0%,#9a6a6c 35%,#b84848 70%,#c92226 100%)"></div>
<div class="hd" style="left:94px;top:149px"></div>
<span class="abs t" style="left:7px;top:162.500px">明度:</span>
<div class="abs nb" style="left:160px;top:159.500px"><span>0</span></div>
<div class="abs" style="left:11px;top:176px;width:176px;height:3px;border-radius:2px;background:linear-gradient(90deg,#000 0%,#111 10%,#8a8a8a 55%,#fff 92%,#fff 100%)"></div>
<div class="hd" style="left:94px;top:178.500px"></div>
<!-- eyedroppers -->
<svg class="abs" style="left:7.200px;top:192.500px" width="15.500" height="15.500" viewBox="0 0 16 16"><path d="M13.300 2.700c.9.900.7 2.100-.1 2.900l-1.500 1.500.6.600-1.100 1.100-.7-.7-4.700 4.700c-.5.500-1.200.7-1.800.5l-1 .8-.6-.6.800-1c-.2-.6 0-1.300.5-1.800l4.700-4.700-.7-.7 1.100-1.100.6.600 1.500-1.500c.8-.8 2-.9 2.400-.6zM8.600 6.900L4.300 11.200c-.3.300-.3.700-.2.900.2.100.6.100.9-.2l4.300-4.300z" fill="#a9a8aa"/></svg>
<svg class="abs" style="left:26px;top:192.500px" width="15.500" height="15.500" viewBox="0 0 16 16"><path d="M13.300 2.700c.9.900.7 2.100-.1 2.900l-1.500 1.500.6.600-1.100 1.100-.7-.7-4.700 4.700c-.5.500-1.200.7-1.800.5l-1 .8-.6-.6.800-1c-.2-.6 0-1.300.5-1.800l4.700-4.700-.7-.7 1.100-1.100.6.600 1.500-1.500c.8-.8 2-.9 2.400-.6zM8.600 6.900L4.300 11.200c-.3.300-.3.700-.2.900.2.100.6.100.9-.2l4.300-4.300z" fill="#a9a8aa"/><path d="M11 13.200h3.200M12.600 11.600v3.200" stroke="#a9a8aa" stroke-width="1"/></svg>
<svg class="abs" style="left:45px;top:192.500px" width="15.500" height="15.500" viewBox="0 0 16 16"><path d="M13.300 2.700c.9.900.7 2.100-.1 2.900l-1.500 1.500.6.600-1.100 1.100-.7-.7-4.700 4.700c-.5.500-1.200.7-1.800.5l-1 .8-.6-.6.800-1c-.2-.6 0-1.300.5-1.800l4.700-4.700-.7-.7 1.100-1.100.6.600 1.500-1.500c.8-.8 2-.9 2.400-.6zM8.600 6.900L4.300 11.200c-.3.300-.3.700-.2.900.2.100.6.100.9-.2l4.300-4.300z" fill="#a9a8aa"/><path d="M11 13.200h3.200" stroke="#a9a8aa" stroke-width="1"/></svg>
<div class="abs" style="left:71.500px;top:194.500px;width:9.500px;height:9.500px;border:1px solid #8d8c8e;border-radius:1.500px;background:#4a494b"></div>
<span class="abs t" style="left:86px;top:195.500px">着色</span>
<!-- colour bars -->
<div class="abs" style="left:8.500px;top:221.500px;width:181.500px;height:4.500px;background:linear-gradient(90deg,#10d8d0 0%,#1088e0 7%,#1020d0 16%,#7010c8 25%,#e010d8 36%,#e81080 44%,#e81818 50%,#f08010 58%,#f0e818 66%,#70d818 76%,#10c830 84%,#10d890 92%,#10d8d0 100%)"></div>
<div class="abs" style="left:8.500px;top:230.500px;width:181.500px;height:4.500px;background:linear-gradient(90deg,#10d8d0 0%,#1088e0 7%,#1020d0 16%,#7010c8 25%,#e010d8 36%,#e81080 44%,#e81818 50%,#f08010 58%,#f0e818 66%,#70d818 76%,#10c830 84%,#10d890 92%,#10d8d0 100%)"></div>
<!-- scrollbar -->
<div class="abs" style="left:199px;top:56px;width:10px;height:203px;background:#4d4c4e"></div>
<div class="abs" style="left:199px;top:68px;width:9.500px;height:175px;background:#6b6a6c"></div>
<svg class="abs" style="left:200.500px;top:60px" width="7" height="5" viewBox="0 0 7 5"><path d="M.6 4.300l2.900-2.900 2.900 2.900" fill="none" stroke="#8e8d8f" stroke-width="1.100"/></svg>
<svg class="abs" style="left:200.500px;top:248.500px" width="7" height="5" viewBox="0 0 7 5"><path d="M.6.700l2.900 2.900L6.400.700" fill="none" stroke="#b0afb1" stroke-width="1.100"/></svg>
<!-- footer -->
<div class="abs" style="left:0;top:259px;width:209px;height:1px;background:#3f3e40"></div>
<div class="abs" style="left:152px;top:260px;width:20px;height:18.500px;background:#414042"></div>
<div class="abs" style="left:0;top:278.500px;width:209px;height:1px;background:#3f3e40"></div>
<div class="abs" style="left:0;top:279.500px;width:209px;height:4.500px;background:#4a494b"></div>
<svg class="abs" style="left:86.500px;top:263.500px" width="16" height="12" viewBox="0 0 16 12"><rect x="5.500" y="1" width="9" height="9" fill="#e6e6e6"/><path d="M1 5.500l3 2.200V3.300zM1.200 8.500l2.600 1.800M1.200 10.300l2.600-1.800" fill="#e6e6e6" stroke="#e6e6e6" stroke-width=".8"/></svg>
<svg class="abs" style="left:108px;top:263px" width="17" height="13" viewBox="0 0 17 13"><g fill="none" stroke="#a3a2a4" stroke-width="1.200"><path d="M1 6c1.600-2.400 3.400-3.600 5.600-3.600 2.200 0 4 1.200 5.600 3.600-1.600 2.400-3.400 3.600-5.600 3.600C4.400 9.600 2.600 8.400 1 6z"/><circle cx="6.600" cy="6" r="1.500"/><path d="M13.400 3.400c1.400 1.600 1.600 4.400-.8 6.800"/></g><path d="M11.200 9.200l2.800.2-.8 2.400z" fill="#a3a2a4"/></svg>
<svg class="abs" style="left:131.500px;top:263px" width="13" height="13" viewBox="0 0 13 13"><g fill="none" stroke="#a3a2a4" stroke-width="1.200"><path d="M3.600 4.400A3.800 3.800 0 1 1 7 10.200"/><path d="M2 11.600h9"/></g><path d="M1.400 3.200l3.400-.6-.6 3.400z" fill="#a3a2a4"/></svg>
<svg class="abs" style="left:156.500px;top:265px" width="10.500" height="7.300" viewBox="0 0 13 9"><path d="M.4 4.500C2 1.900 4 .6 6.500.6S11 1.900 12.600 4.500C11 7.100 9 8.400 6.500 8.400S2 7.100.4 4.500z" fill="#f4f4f4"/><circle cx="6.500" cy="4.500" r="2.200" fill="#414042"/><circle cx="6.500" cy="4.500" r="1" fill="#f4f4f4"/></svg>
<svg class="abs" style="left:180px;top:264px" width="8.500" height="10.800" viewBox="0 0 11 14"><g fill="#c9c8ca"><rect x="3.600" y=".6" width="3.800" height="1.600"/><rect x=".8" y="2.200" width="9.400" height="1.800"/><path d="M1.600 4.800h7.800l-.5 8.400H2.100z"/></g><path d="M3.800 6.200v5.800M5.500 6.200v5.800M7.200 6.200v5.800" stroke="#535254" stroke-width=".8"/></svg>
</div>
<!-- teal highlight box -->
<div class="abs" style="left:559px;top:187.200px;width:40.300px;height:28px;border:2.300px solid #3cc3c6"></div>
<div id="ime" class="abs" style="left:497.500px;top:484px;width:137.500px;height:17.500px;background:#fdfdfd"></div>
<svg class="abs" style="left:482px;top:480px" width="23" height="24" viewBox="0 0 23 24"><g transform="rotate(-6 11.500 12)"><rect x="1.500" y="1.800" width="20" height="20.500" rx="3.500" fill="#ee5a23"/><path d="M16 7.600C14 6.500 8.500 6.200 7.600 8.800C6.800 11.800 15.800 11 15.400 14.600C15 17.600 9 17.400 6.600 16" fill="none" stroke="#fff" stroke-width="2.700" stroke-linecap="round"/></g></svg>
<span class="abs" style="left:507.500px;top:487.300px;font-size:12.500px;font-weight:bold;color:#2272b4;font-family:'Liberation Sans','Noto Sans CJK SC',sans-serif">中</span>
<svg class="abs" style="left:524px;top:485px" width="11" height="14" viewBox="0 0 11 14"><circle cx="3" cy="4.200" r="1.400" fill="none" stroke="#2272b4" stroke-width="1"/><path d="M7.200 6.500a1.400 1.400 0 1 1 1.500 1.400c0 1.400-.7 2.300-1.900 2.800.6-.6.900-1.300.8-2.600-.3-.4-.4-1-.4-1.600z" fill="#2272b4"/></svg>
<svg class="abs" style="left:539px;top:485.500px" width="14" height="14" viewBox="0 0 14 14"><circle cx="7" cy="7" r="5.700" fill="none" stroke="#2272b4" stroke-width="1.200"/><circle cx="5" cy="5.600" r=".8" fill="#2272b4"/><circle cx="9" cy="5.600" r=".8" fill="#2272b4"/><path d="M4.200 8.600c1.400 1.800 4.200 1.800 5.600 0" fill="none" stroke="#2272b4" stroke-width="1"/></svg>
<svg class="abs" style="left:556px;top:485px" width="11" height="15" viewBox="0 0 11 15"><rect x="3.500" y=".8" width="4" height="8" rx="2" fill="#2272b4"/><path d="M1.600 6.200c0 5.200 7.800 5.200 7.800 0M5.500 10.400v2.600M3 13.400h5" fill="none" stroke="#2272b4" stroke-width="1.200"/></svg>
<svg class="abs" style="left:570.500px;top:487px" width="14" height="11" viewBox="0 0 14 11"><rect x=".6" y=".6" width="12.800" height="9.800" rx="1.200" fill="#2272b4"/><g fill="#fff"><rect x="2" y="2.200" width="1.600" height="1.400"/><rect x="4.600" y="2.200" width="1.600" height="1.400"/><rect x="7.200" y="2.200" width="1.600" height="1.400"/><rect x="9.800" y="2.200" width="1.600" height="1.400"/><rect x="2" y="4.600" width="1.600" height="1.400"/><rect x="4.600" y="4.600" width="1.600" height="1.400"/><rect x="7.200" y="4.600" width="1.600" height="1.400"/><rect x="9.800" y="4.600" width="1.600" height="1.400"/><rect x="3.400" y="7.200" width="7.200" height="1.400"/></g></svg>
<svg class="abs" style="left:587.500px;top:485.500px" width="13" height="14" viewBox="0 0 13 14"><g fill="#b9bec6"><circle cx="5.600" cy="3.400" r="2.600"/><path d="M.8 12.600c0-4 2-5.600 4.800-5.600s4.800 1.600 4.800 5.600z"/><rect x="7.400" y="8.200" width="5" height="4.600" rx=".6" fill="#d4d8de" stroke="#aab0b8" stroke-width=".6"/></g></svg>
<svg class="abs" style="left:603px;top:486px" width="14" height="13" viewBox="0 0 14 13"><path d="M4.600.8c.8 1.400 4 1.400 4.800 0l4 2-1.600 3.200-1.800-.8v7H4V5.200l-1.800.8L.6 2.800z" fill="#2272b4"/></svg>
<svg class="abs" style="left:619px;top:485.500px" width="14" height="14" viewBox="0 0 14 14"><path d="M12.800 3.600a3.400 3.400 0 0 1-4.700 3.600L3.600 12.400a1.400 1.400 0 0 1-2-2L6.800 5.900A3.400 3.400 0 0 1 10.400 1.200L8.600 3l.6 1.800 1.800.6z" fill="#2272b4"/></svg>
<div class="abs" style="left:785.500px;top:78px;width:1.500px;height:367px;background:#454446"></div>
</body>
</html>
